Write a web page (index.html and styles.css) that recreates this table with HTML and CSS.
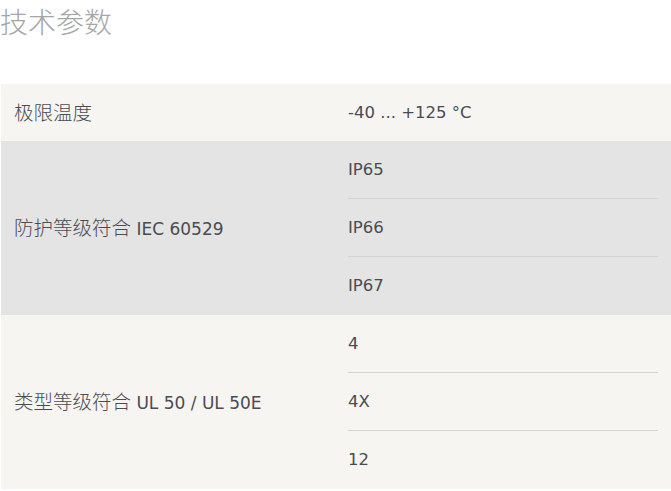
FILE: index.html
```html
<!DOCTYPE html>
<html lang="zh">
<head>
<meta charset="utf-8">
<title>技术参数</title>
<link rel="stylesheet" href="styles.css">
</head>
<body>
<h2 class="title">技术参数</h2>
<div class="spec">
  <div class="row light">
    <div class="label"><span class="zh">极限温度</span></div>
    <div class="values"><div class="val">-40 ... +125 °C</div></div>
  </div>
  <div class="row grey">
    <div class="label"><span class="zh">防护等级符合</span> IEC 60529</div>
    <div class="values">
      <div class="val">IP65</div>
      <div class="val">IP66</div>
      <div class="val">IP67</div>
    </div>
  </div>
  <div class="row light">
    <div class="label"><span class="zh">类型等级符合</span> UL 50 / UL 50E</div>
    <div class="values">
      <div class="val">4</div>
      <div class="val">4X</div>
      <div class="val">12</div>
    </div>
  </div>
</div>
</body>
</html>
```
FILE: styles.css
```css
html, body {
  margin: 0;
  padding: 0;
  background: #ffffff;
}
body {
  font-family: "DejaVu Sans", "Noto Sans CJK SC", sans-serif;
  color: #4b4b52;
}
.title {
  margin: 0;
  padding-top: 1px;
  height: 83px;
  font-family: "Noto Sans CJK SC", sans-serif;
  font-size: 28px;
  line-height: 40px;
  font-weight: 300;
  color: #a6a6a6;
}
.spec {
  margin-left: 1px;
}
.row {
  display: grid;
  grid-template-columns: 347px 1fr;
  align-items: center;
}
.row.light { background: #f6f5f1; }
.row.grey { background: #e4e4e4; }
.label {
  padding-left: 13px;
  font-size: 17px;
  line-height: 24px;
}
.zh {
  font-family: "Noto Sans CJK SC", sans-serif;
  font-size: 19.5px;
  font-weight: 300;
}
.values {
  margin-right: 13px;
  padding-bottom: 1px;
}
.row:first-child .values { padding-bottom: 0; }
.val {
  height: 57px;
  display: flex;
  align-items: center;
  font-size: 16.5px;
}
.val + .val {
  border-top: 1px solid #d3d3d3;
}
```
